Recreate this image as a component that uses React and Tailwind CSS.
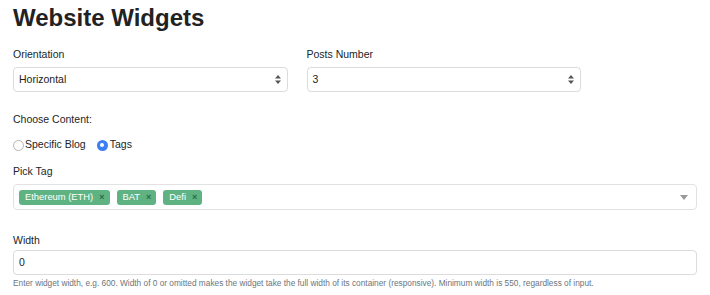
import React from 'react';

function SelectBox({ value }) {
  return (
    <div className="h-[25px] flex items-center justify-between border border-[#dcdcdc] rounded-[4px] bg-white pl-[5px] pr-[6px] text-[10.5px] text-[#222]">
      <span>{value}</span>
      <svg width="6" height="9" viewBox="0 0 6 9">
        <path d="M3 0 L6 3.5 L0 3.5 Z" fill="#555" />
        <path d="M3 9 L6 5.5 L0 5.5 Z" fill="#555" />
      </svg>
    </div>
  );
}

function Tag({ label }) {
  return (
    <span className="h-[15px] flex items-center gap-[6px] bg-[#5fb382] rounded-[3px] pl-[6px] pr-[5px] text-[9.4px] text-white">
      {label}
      <span className="text-[9px] text-[#2f6b47] font-bold leading-none">×</span>
    </span>
  );
}

export default function App() {
  const tags = ["Ethereum (ETH)", "BAT", "Defi"];

  return (
    <div className="w-[710px] h-[295px] bg-white px-[13px] pt-[6px] text-[#212529]" style={{ fontFamily: '"Liberation Sans", Arial, sans-serif' }}>
      <h1 className="text-[24px] leading-[24px] font-bold text-[#222]">Website Widgets</h1>

      {/* selects */}
      <div className="mt-[17px] flex gap-[19px] w-[568px]">
        <div className="flex-1 flex flex-col">
          <label className="text-[10.5px] leading-[14px]">Orientation</label>
          <div className="mt-[6px]"><SelectBox value="Horizontal" /></div>
        </div>
        <div className="flex-1 flex flex-col">
          <label className="text-[10.5px] leading-[14px]">Posts Number</label>
          <div className="mt-[6px]"><SelectBox value="3" /></div>
        </div>
      </div>

      <div className="mt-[20px] text-[10.5px] leading-[14px]">Choose Content:</div>

      {/* radios */}
      <div className="mt-[12px] flex items-center h-[14px] text-[10.5px]">
        <span className="w-[11px] h-[11px] rounded-full border border-[#b5b5b5] bg-white mr-[1px]" />
        <span>Specific Blog</span>
        <span className="ml-[11px] w-[11px] h-[11px] rounded-full bg-[#3d7ef5] flex items-center justify-center mr-[2px]">
          <span className="w-[4px] h-[4px] rounded-full bg-white" />
        </span>
        <span>Tags</span>
      </div>

      <div className="mt-[12px] text-[10.5px] leading-[14px]">Pick Tag</div>

      {/* tag select */}
      <div className="mt-[6px] h-[26px] border border-[#e2e2e2] rounded-[4px] flex items-center justify-between pl-[5px] pr-[8px]">
        <div className="flex gap-[7px]">
          {tags.map(t => <Tag key={t} label={t} />)}
        </div>
        <svg width="8" height="5" viewBox="0 0 8 5">
          <path d="M0 0 L8 0 L4 5 Z" fill="#999" />
        </svg>
      </div>

      <div className="mt-[23px] text-[10.5px] leading-[14px]">Width</div>
      <div className="mt-[3px] h-[25px] border border-[#dcdcdc] rounded-[4px] flex items-center pl-[5px] text-[10.5px]">0</div>
      <div className="mt-[3px] text-[8.3px] leading-[10px] text-[#6c757d]">
        Enter widget width, e.g. 600. Width of 0 or omitted makes the widget take the full width of its container (responsive). Minimum width is 550, regardless of input.
      </div>
    </div>
  );
}
